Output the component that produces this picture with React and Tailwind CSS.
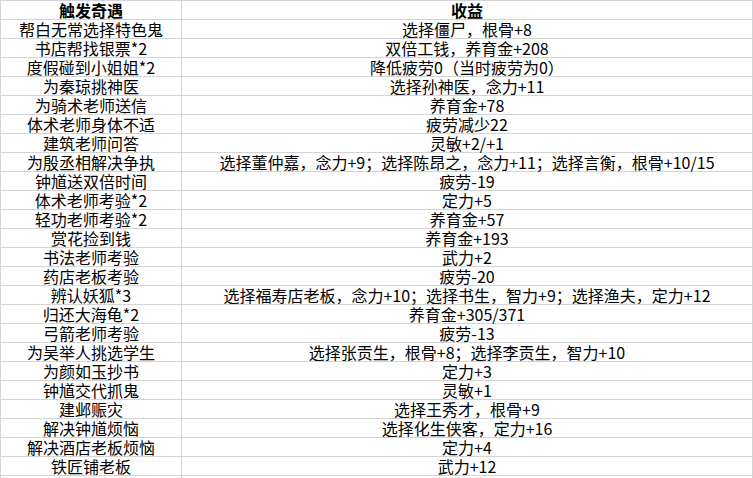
import React from 'react';

const rows = [
  ['帮白无常选择特色鬼', '选择僵尸，根骨+8'],
  ['书店帮找银票*2', '双倍工钱，养育金+208'],
  ['度假碰到小姐姐*2', '降低疲劳0（当时疲劳为0）'],
  ['为秦琼挑神医', '选择孙神医，念力+11'],
  ['为骑术老师送信', '养育金+78'],
  ['体术老师身体不适', '疲劳减少22'],
  ['建筑老师问答', '灵敏+2/+1'],
  ['为殷丞相解决争执', '选择董仲嘉，念力+9；选择陈昂之，念力+11；选择言衡，根骨+10/15'],
  ['钟馗送双倍时间', '疲劳-19'],
  ['体术老师考验*2', '定力+5'],
  ['轻功老师考验*2', '养育金+57'],
  ['赏花捡到钱', '养育金+193'],
  ['书法老师考验', '武力+2'],
  ['药店老板考验', '疲劳-20'],
  ['辨认妖狐*3', '选择福寿店老板，念力+10；选择书生，智力+9；选择渔夫，定力+12'],
  ['归还大海龟*2', '养育金+305/371'],
  ['弓箭老师考验', '疲劳-13'],
  ['为吴举人挑选学生', '选择张贡生，根骨+8；选择李贡生，智力+10'],
  ['为颜如玉抄书', '定力+3'],
  ['钟馗交代抓鬼', '灵敏+1'],
  ['建邺赈灾', '选择王秀才，根骨+9'],
  ['解决钟馗烦恼', '选择化生侠客，定力+16'],
  ['解决酒店老板烦恼', '定力+4'],
  ['铁匠铺老板', '武力+12'],
  ['', ''],
];

export default function App() {
  return (
    <div
      className="w-[753px] h-[478px] overflow-hidden bg-white text-black text-[16px]"
      style={{ fontFamily: '"Noto Sans CJK SC", "Noto Sans", sans-serif' }}
    >
      {/* header */}
      <div className="flex h-[20px] border-t border-b border-[#cfd4dc] font-bold">
        <div className="w-[182px] border-l border-r border-[#cfd4dc] text-center leading-[18px]">
          触发奇遇
        </div>
        <div className="w-[571px] border-r border-[#cfd4dc] text-center leading-[18px]">
          收益
        </div>
      </div>

      {rows.map(([trigger, reward], i) => (
        <div key={i} className="flex h-[19px] border-b border-[#d4d4d4]">
          <div className="w-[182px] border-l border-r border-[#d4d4d4] text-center leading-[18px] whitespace-nowrap">
            {trigger}
          </div>
          <div className="w-[571px] border-r border-[#d4d4d4] text-center leading-[18px] whitespace-nowrap">
            {reward}
          </div>
        </div>
      ))}
    </div>
  );
}
